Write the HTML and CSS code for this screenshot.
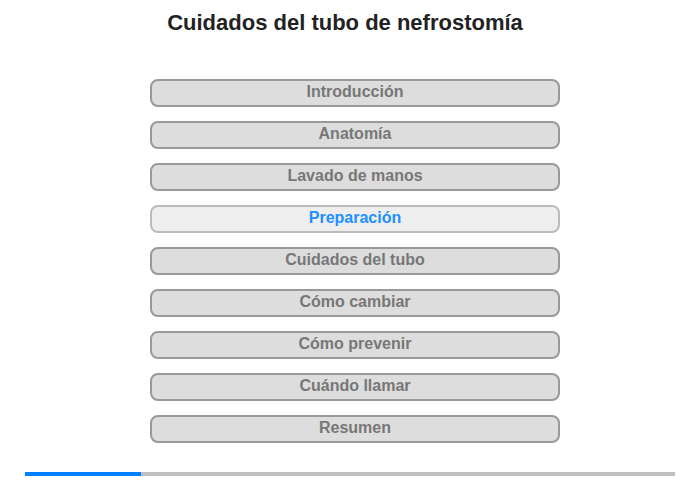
FILE: index.html
```html
<!DOCTYPE html>
<html lang="es">
<head>
<meta charset="utf-8">
<link rel="stylesheet" href="styles.css">
</head>
<body>
<div class="page">
  <h1 class="title">Cuidados del tubo de nefrostomía</h1>
  <nav class="menu">
    <div class="item">Introducción</div>
    <div class="item">Anatomía</div>
    <div class="item">Lavado de manos</div>
    <div class="item active">Preparación</div>
    <div class="item">Cuidados del tubo</div>
    <div class="item">Cómo cambiar</div>
    <div class="item">Cómo prevenir</div>
    <div class="item">Cuándo llamar</div>
    <div class="item">Resumen</div>
  </nav>
  <div class="progress"><div class="progress-fill" style="width:116px"></div></div>
</div>
</body>
</html>
```

FILE: styles.css
```css
html, body {
  margin: 0;
  padding: 0;
  background: #fff;
}
body {
  font-family: "Liberation Sans", Arial, sans-serif;
  width: 700px;
  height: 480px;
  overflow: hidden;
}
.page {
  display: flex;
  flex-direction: column;
}
.title {
  margin: 10px 0 0 0;
  padding-right: 10px;
  font-size: 22px;
  line-height: 25px;
  font-weight: bold;
  color: #222;
  text-align: center;
}
.menu {
  display: flex;
  flex-direction: column;
  gap: 14px;
  margin-top: 44px;
  padding-left: 150px;
}
.item {
  box-sizing: border-box;
  width: 410px;
  height: 28px;
  border: 2px solid #999;
  border-radius: 8px;
  background: #ddd;
  color: #777;
  font-size: 16px;
  font-weight: bold;
  line-height: 22px;
  text-align: center;
}
.item.active {
  background: #eee;
  border-color: #bbb;
  color: #1e90ff;
}
.progress {
  margin: 29px 0 0 25px;
  width: 650px;
  height: 4px;
  background: #c0c0c0;
}
.progress-fill {
  height: 100%;
  background: #0080ff;
}
```
